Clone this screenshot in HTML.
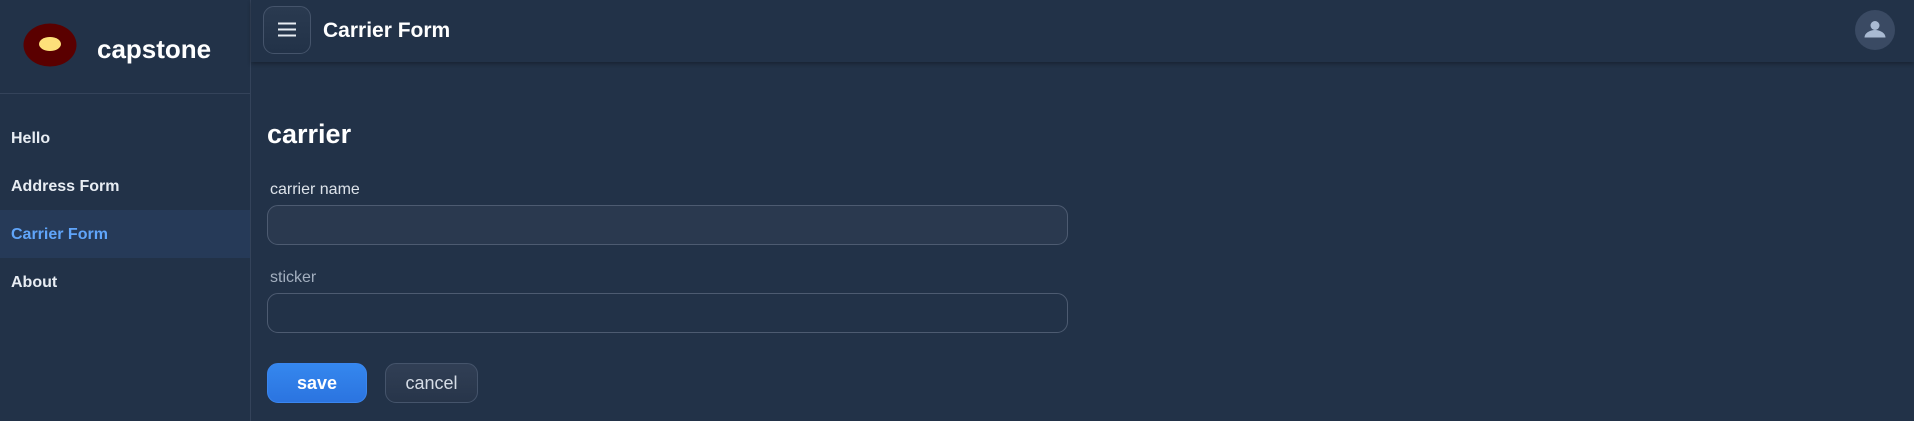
<!DOCTYPE html>
<html><head><style>
*{box-sizing:border-box;margin:0;padding:0}
body{width:1914px;height:421px;background:#223248;font-family:"Liberation Sans",sans-serif;position:relative;overflow:hidden;color:#fff}
.abs{position:absolute}
.side{left:0;top:0;width:251px;height:421px;border-right:1px solid #34435a;background:#223248}
.hdr{left:0;top:0;width:250px;height:94px;border-bottom:1px solid #34435a}
.nav{left:0;width:250px;height:48px;font-size:16px;font-weight:bold;padding-left:11px;line-height:50px;color:#e8edf3}
.top{left:251px;top:0;width:1663px;height:62px;background:#223248;box-shadow:0 2px 4px rgba(0,0,0,.3)}
</style></head><body>
<div class="abs side"></div>
<div class="abs hdr"></div>
<svg class="abs" style="left:22px;top:22px" width="56" height="46"><ellipse cx="28" cy="23" rx="26.5" ry="21.5" fill="#5a0000"/><ellipse cx="28" cy="22" rx="11" ry="7" fill="#fde07a"/></svg>
<div class="abs" style="left:97px;top:31px;font-size:26px;font-weight:bold;line-height:36px">capstone</div>
<div class="abs nav" style="top:114px">Hello</div>
<div class="abs nav" style="top:162px">Address Form</div>
<div class="abs nav" style="top:210px;background:#263a58;color:#60a5fa">Carrier Form</div>
<div class="abs nav" style="top:258px">About</div>
<div class="abs top"></div>
<div class="abs" style="left:263px;top:6px;width:48px;height:48px;border:1px solid #45546b;border-radius:11px;background:linear-gradient(#2a3a50,#223248)"></div>
<svg class="abs" style="left:277px;top:20px" width="20" height="20"><path d="M1 3.5H19M1 9.5H19M1 15.5H19" stroke="#e8edf3" stroke-width="2"/></svg>
<div class="abs" style="left:323px;top:18px;font-size:21px;font-weight:bold;line-height:26px">Carrier Form</div>
<svg class="abs" style="left:1855px;top:10px" width="40" height="40"><circle cx="20" cy="20" r="20" fill="#3a4a63"/><circle cx="20" cy="15.5" r="4.5" fill="#a9bad2"/><path d="M9.5 27.5 a10.5 7.5 0 0 1 21 0Z" fill="#a9bad2"/></svg>
<div class="abs" style="left:267px;top:117px;font-size:27px;font-weight:bold;line-height:34px">carrier</div>
<div class="abs" style="left:270px;top:180px;font-size:16px;color:#dde3ea;line-height:20px">carrier name</div>
<div class="abs" style="left:267px;top:205px;width:801px;height:40px;border:1px solid #4d5b71;border-radius:11px;background:#2a394f"></div>
<div class="abs" style="left:270px;top:268px;font-size:16px;color:#a3afbf;line-height:20px">sticker</div>
<div class="abs" style="left:267px;top:293px;width:801px;height:40px;border:1px solid #4d5b71;border-radius:11px;background:#223248"></div>
<div class="abs" style="left:267px;top:363px;width:100px;height:40px;border-radius:11px;background:linear-gradient(#3587ee,#2b74e0);border:1px solid #3a86ef;font-size:18px;font-weight:bold;text-align:center;line-height:38px">save</div>
<div class="abs" style="left:385px;top:363px;width:93px;height:40px;border-radius:11px;background:linear-gradient(#313f55,#27354a);border:1px solid #45546b;font-size:18px;color:#d5dce6;text-align:center;line-height:38px">cancel</div>
</body></html>
